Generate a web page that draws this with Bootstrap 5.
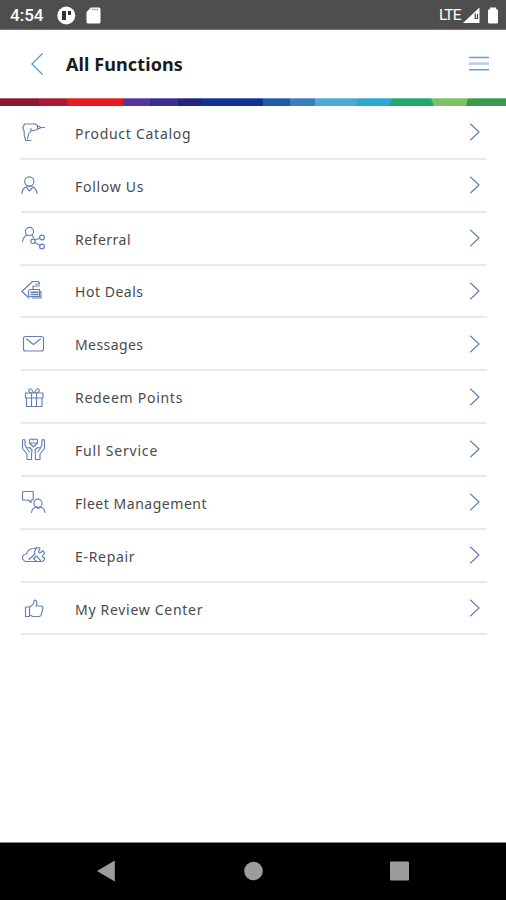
<!DOCTYPE html>
<html lang="en">
<head>
<meta charset="utf-8">
<meta name="viewport" content="width=device-width, initial-scale=1">
<title>All Functions</title>
<link href="https://cdn.jsdelivr.net/npm/bootstrap@5.3.0/dist/css/bootstrap.min.css" rel="stylesheet">
<style>
body{font-family:"Noto Sans",sans-serif;height:900px;overflow:hidden}
svg{display:block;flex:none}
.status{height:30px;background:#4e4e4e;border-bottom:1px solid #777;padding:0 7px 0 10px}
.clock{font:500 17px/30px Roboto,sans-serif;width:46px;padding-top:1px}
.lte{font:400 15.5px/30px Roboto,sans-serif;letter-spacing:-.9px;width:23px;padding-top:1px}
.topbar{height:68px;padding:0 16px 0 30px}
.topbar h1{font-size:18px;font-weight:700;letter-spacing:.1px;line-height:24px;color:#1a1a1a;margin-left:22px}
#functions{width:466px;margin-left:21px;padding-top:1px}
.func{height:52.85px;border-bottom:2px solid #e9e9e9;color:#4a4a4a}
.func .name{font-size:14px;line-height:20px;padding-top:3px;margin-left:28px}
.ico{fill:none;stroke:#6480b4;stroke-width:1.15;stroke-linejoin:round;stroke-linecap:round}
.go{margin-right:6px}
.softkeys{height:58px;border-top:1px solid #888}
</style>
<script src="https://cdn.jsdelivr.net/npm/bootstrap@5.3.0/dist/js/bootstrap.bundle.min.js"></script>
</head>
<body class="bg-white d-flex flex-column m-0">
<header>
  <div class="status d-flex align-items-center text-white">
    <span class="clock">4:54</span>
    <svg width="50" height="20" viewBox="0 0 50 20"><circle cx="10.300" cy="10.500" r="9" fill="#fff"/><path d="M6 6h4v9H6zM12 6h3v4h-3z" fill="#333"/><path d="M35 2.500h8q1.500 0 1.500 1.500v13q0 1.500-1.500 1.500H32q-1.500 0-1.500-1.500V7z" fill="#fff"/><path d="M36 4.500h6" stroke="#888" stroke-width="1.300" stroke-dasharray="1.300 1"/></svg>
    <span class="lte ms-auto">LTE</span>
    <svg width="37" height="20" viewBox="0 0 37 20"><path d="M1 18 17.500 2.500V18z" fill="#fff"/><path d="M13.200 8.500v5h2.300V9" fill="none" stroke="#444" stroke-width="1.200"/><path d="M28 2.500h6v1.500q2 0 2 1.500v11.500q0 1.500-1.500 1.500h-7q-1.500 0-1.500-1.500V5.500q0-1.500 2-1.500z" fill="#fff"/></svg>
  </div>
  <nav class="topbar d-flex align-items-center">
    <svg width="14" height="24" viewBox="0 0 14 24"><path d="M12.500 1.500 2 12l10.500 10.500" fill="none" stroke="#4a9fd4" stroke-width="1.300"/></svg>
    <h1 class="mb-0">All Functions</h1>
    <svg class="ms-auto" width="22" height="18" viewBox="0 0 22 18"><path d="M1 2.500h20M1 14.800h20" stroke="#6d9dcc" stroke-width="1.600"/><path d="M1 8.600h20" stroke="#b9cfe6" stroke-width="2.400"/></svg>
  </nav>
  <svg width="506" height="8" viewBox="0 0 506 8">
    <path fill="#8b1730" d="M0 0h40v8H0z"/><path fill="#ab1734" d="M39 0h29v8H39z"/><path fill="#e31a22" d="M67 0h56v8H67z"/>
    <path fill="#5634a0" d="M123 0h28v8h-28z"/><path fill="#3c2c98" d="M150 0h29v8h-29z"/><path fill="#23257f" d="M178 0h26v8h-26z"/><path fill="#113194" d="M202 0h62v8h-62z"/>
    <path fill="#2259a9" d="M263 0h28v8h-28z"/><path fill="#3b7ebc" d="M290 0h26v8h-26z"/><path fill="#4baad2" d="M315 0h44v8h-44z"/><path fill="#2aa8cd" d="M357 0h35v8h-35z"/>
    <path fill="#20a96e" d="M392 0h42v8h-44z"/><path fill="#7bc362" d="M431 0h37v8h-34z"/><path fill="#3b984c" d="M468 0h38v8h-40z"/>
    <path fill="#fff" opacity=".3" d="M0 0h506v1H0z"/>
  </svg>
</header>
<main class="flex-grow-1">
  <ul class="list-unstyled mb-0" id="functions"></ul>
</main>
<footer class="softkeys bg-black">
  <svg width="506" height="56" viewBox="0 0 506 56"><g fill="#9c9c9c"><path d="M97 28 114.800 17.500v21z"/><circle cx="253.500" cy="28" r="9.300"/><rect x="390" y="18.500" width="19" height="19" rx="1"/></g></svg>
</footer>
<script>
// label, letter spacing in px, icon strokes
const items = [
  ["Product Catalog", .73, '<path d="M3.500 5h11l2 1.500v4L10 12l-2.500 3-1 5M3.500 5 1.700 9l1.500 3v4l1.500 5.500H10M10 12V9.500M16.500 7.500h2.500v2h-2.500M19 8.500h4.500"/>'],
  ["Follow Us", .7, '<circle cx="8.300" cy="9.500" r="4.600"/><path d="M1 21.500q.2-5 4-6.500l3.500 4 3.500-4q3.500 1.500 4 6.500M5.500 13.500q3 2 5.500 0"/>'],
  ["Referral", .5, '<circle cx="8.500" cy="6.500" r="4.100"/><path d="M1.500 16.500q.6-4.500 4.500-6.500M11 10l2 3M14 15l5-2M14 17.500l5 3"/><circle cx="12" cy="16.300" r="2.200"/><circle cx="21" cy="12.500" r="2.400"/><circle cx="21" cy="21.500" r="2.400"/>'],
  ["Hot Deals", .53, '<path d="M8 20 1 13.500 11.500 3.500h5.500l1.500 1.500M7.500 17V13.500q0-2 2-2h9v7H9q-1.500 0-1.500-1.500M12 11.500V8h6.500M15 6h3.500M18.500 13.500h1.500v6.500H11"/><path d="M10 14.300h7M10 16.500h7" stroke-width="1.400"/>'],
  ["Messages", .42, '<rect x="2.500" y="5.500" width="20" height="14.500" rx="2"/><path d="M5.500 8 12.500 13.500l7-5.500"/>'],
  ["Redeem Points", .72, '<path d="M4.500 9h17.500v5h-17.500zM5.500 14v8.500h15.500V14M10.500 9v13.500M15.500 9v13.500M12.500 9Q6.500 8.500 8 5.500q2-2.500 4.500 3.500M13.500 9Q19.500 8.500 18 5.500q-2-2.500-4.500 3.500"/>'],
  ["Full Service", .8, '<path d="M1.500 4.500v8L6 18v5.500h4.500V19l.5-5-2.500-2.500-3 .5L4 8.500V4q-1.500-1-2.500.5M23.500 4.500v8L19 18v5.500h-4.500V19l-.5-5 2.500-2.500 3 .5L21 8.500V4q1.500-1 2.500.5M12.500 11 8.500 7V4q2-2 4 0 2-2 4 0v3zM8.500 7h8M6 13l2.500 3M19 13l-2.500 3"/>'],
  ["Fleet Management", .53, '<path d="M2.500 2.500h9.700v8.500H10v2.500L7 11H2.500q-1 0-1-1V3.500q0-1 1-1z"/><circle cx="17" cy="14.200" r="4.100"/><path d="M10.500 23.500q.5-4 4-5.500l2.500 1.500 3-1.500q3.500 1.500 4 5.500"/>'],
  ["E-Repair", .7, '<path d="M5 19.500q-3.500-1-3.500-4T5.500 12Q7 6.500 13 6.500l3-1M5 19.500h16q2.500-.5 2.500-3.500L21 14.500l2.500-3-1.500-3-3 2.500-1.500-1L19 6l-3-.5-2.500 4 .5 2.500-6 5.500M15.500 19.500l-3-3 3-2.500 4 4.500"/>'],
  ["My Review Center", .7, '<path d="M4.500 12h4v9.500h-4zM8.500 12 12 9.500q1-1 1-4 1.800-1 2.700 1 .6 2-.7 4.500h5q2 0 2 2L20.500 19q-.5 2.500-2.500 2.500h-6L8.500 20"/>']
];
document.getElementById('functions').innerHTML = items.map(([name, spacing, art]) =>
  `<li class="func d-flex align-items-center"><svg class="ico" width="26" height="26" viewBox="0 0 26 26">${art}</svg>
  <span class="name" style="letter-spacing:${spacing}px">${name}</span>
  <svg class="ico go ms-auto" width="13" height="20" viewBox="0 0 13 20"><path d="M2.500 2 11 10l-8.500 8"/></svg></li>`).join('');
</script>
</body>
</html>
